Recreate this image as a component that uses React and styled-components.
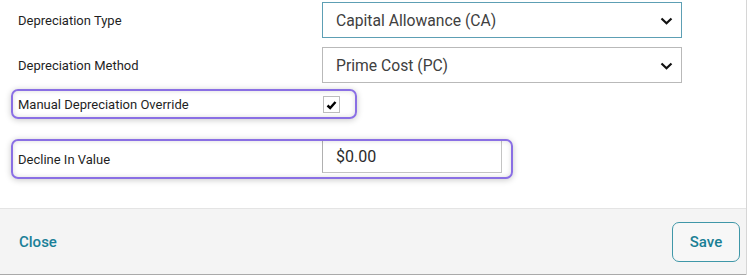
import React from 'react';
import styled, { createGlobalStyle } from 'styled-components';

const GlobalStyle = createGlobalStyle`
  html, body {
    margin: 0;
    padding: 0;
    background: #ffffff;
    font-family: Roboto, "Liberation Sans", Arial, sans-serif;
  }
  * {
    box-sizing: border-box;
  }
`;

const Panel = styled.div`
  width: 747px;
  height: 275px;
  display: flex;
  flex-direction: column;
  border-right: 1px solid #d6d6d6;
  background: #ffffff;
`;

const Body = styled.div`
  height: 208px;
  padding-top: 2px;
  display: flex;
  flex-direction: column;
`;

const Row = styled.div`
  display: flex;
  align-items: center;
  padding-left: 18px;
  margin-top: ${(p) => p.gap || 0}px;
`;

const HighlightRow = styled.div`
  position: relative;
  display: flex;
  align-items: center;
  width: ${(p) => p.width}px;
  height: ${(p) => p.height}px;
  margin-left: 11px;
  margin-top: ${(p) => p.gap || 0}px;
  padding-left: 7px;

  &::after {
    content: '';
    position: absolute;
    inset: 0;
    border: 2px solid #8a6fe4;
    border-radius: 7px;
    box-shadow: 0 1px 6px rgba(0, 0, 0, 0.22), inset 0 0 5px rgba(0, 0, 0, 0.14);
    pointer-events: none;
  }
`;

const Label = styled.span`
  width: 304px;
  flex-shrink: 0;
  font-size: 13px;
  color: #1f1f1f;
`;

const SelectWrap = styled.div`
  position: relative;
  width: 360px;
  height: ${(p) => p.height}px;
`;

const Select = styled.select`
  appearance: none;
  width: 100%;
  height: 100%;
  padding: 0 30px 0 13px;
  font-family: inherit;
  font-size: 15.7px;
  color: #404040;
  background: #ffffff;
  border: 1px solid ${(p) => (p.focused ? '#5d9fb4' : '#b9b9b9')};
  border-radius: 0;
  outline: none;
`;

const Chevron = styled.svg`
  position: absolute;
  right: 9px;
  top: 50%;
  width: 13px;
  height: 8px;
  margin-top: -3px;
  pointer-events: none;
`;

const CheckBox = styled.span`
  width: 17px;
  height: 17px;
  margin-left: 1px;
  margin-top: 1px;
  border: 1px solid #bdbdbd;
  background: #ffffff;
  display: flex;
  align-items: center;
  justify-content: center;
`;

const ValueInput = styled.input`
  align-self: flex-start;
  width: 180px;
  height: 34px;
  padding: 0 13px;
  font-family: inherit;
  font-size: 16px;
  color: #2b2b2b;
  background: #ffffff;
  border: 1px solid #c4c4c4;
  border-top-color: #9a9a9a;
  border-left-color: #b0b0b0;
  border-radius: 0;
  outline: none;
`;

const Footer = styled.div`
  flex: 1;
  display: flex;
  align-items: center;
  justify-content: space-between;
  padding: 0 6px 0 19px;
  background: #f4f4f4;
  border-top: 1px solid #e4e4e4;
  border-bottom: 1px solid #a9a9a9;
`;

const LinkButton = styled.button`
  padding: 0;
  border: 0;
  background: transparent;
  font-family: inherit;
  font-size: 15px;
  font-weight: 500;
  color: #1a8098;
  cursor: pointer;
`;

const OutlineButton = styled.button`
  width: 68px;
  height: 40px;
  border: 1px solid #3f97a8;
  border-radius: 7px;
  background: #f7f7f7;
  font-family: inherit;
  font-size: 15px;
  font-weight: 500;
  color: #1a7f95;
  cursor: pointer;
`;

function DropDown({ value, focused, height }) {
  return (
    <SelectWrap height={height}>
      <Select focused={focused} defaultValue={value}>
        <option>{value}</option>
      </Select>
      <Chevron viewBox="0 0 13 8">
        <path d="M1.5 1.5 L6.5 6.2 L11.5 1.5" fill="none" stroke="#111" strokeWidth="2.2" />
      </Chevron>
    </SelectWrap>
  );
}

export default function App() {
  return (
    <>
      <GlobalStyle />
      <Panel>
        <Body>
          <Row>
            <Label>Depreciation Type</Label>
            <DropDown value="Capital Allowance (CA)" focused height={36} />
          </Row>
          <Row gap={9}>
            <Label>Depreciation Method</Label>
            <DropDown value="Prime Cost (PC)" height={36} />
          </Row>
          <HighlightRow gap={6} width={346} height={30}>
            <Label>Manual Depreciation Override</Label>
            <CheckBox>
              <svg width="11" height="10" viewBox="0 0 11 10">
                <path d="M1.5 5.5 L4.2 8 L9.5 2" fill="none" stroke="#000" strokeWidth="2.4" />
              </svg>
            </CheckBox>
          </HighlightRow>
          <HighlightRow gap={20} width={502} height={40}>
            <Label>Decline In Value</Label>
            <ValueInput defaultValue="$0.00" />
          </HighlightRow>
        </Body>
        <Footer>
          <LinkButton type="button">Close</LinkButton>
          <OutlineButton type="button">Save</OutlineButton>
        </Footer>
      </Panel>
    </>
  );
}
